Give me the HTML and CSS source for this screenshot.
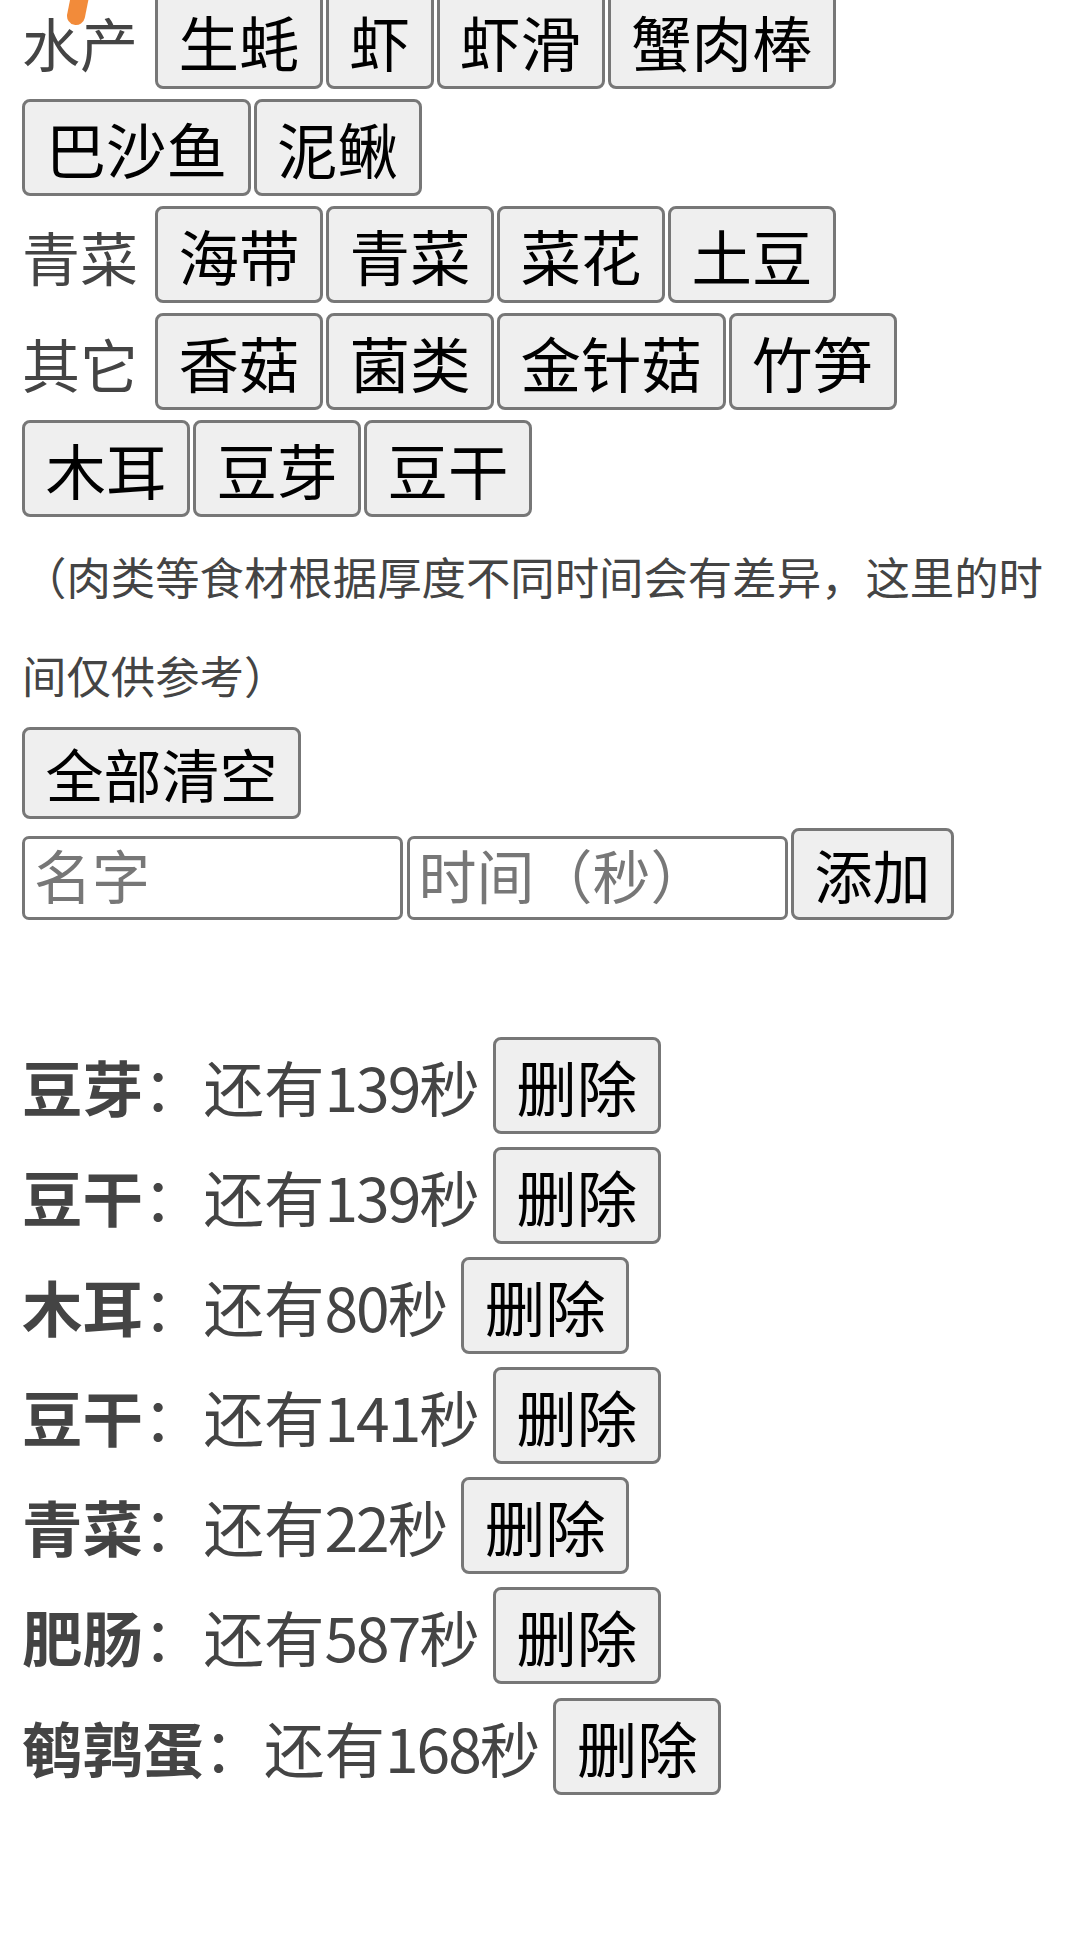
FILE: index.html
```html
<!DOCTYPE html>
<html lang="zh-CN">
<head>
<meta charset="utf-8">
<title>火锅计时器</title>
<link rel="stylesheet" href="styles.css">
</head>
<body>
<div class="page">
  <div class="cats">
    <div class="cat">
      <span class="cat-label">水产</span>
      <button class="btn">生蚝</button>
      <button class="btn">虾</button>
      <button class="btn">虾滑</button>
      <button class="btn">蟹肉棒</button>
      <button class="btn">巴沙鱼</button>
      <button class="btn">泥鳅</button>
    </div>
    <div class="cat">
      <span class="cat-label">青菜</span>
      <button class="btn">海带</button>
      <button class="btn">青菜</button>
      <button class="btn">菜花</button>
      <button class="btn">土豆</button>
    </div>
    <div class="cat">
      <span class="cat-label">其它</span>
      <button class="btn">香菇</button>
      <button class="btn">菌类</button>
      <button class="btn">金针菇</button>
      <button class="btn">竹笋</button>
      <button class="btn">木耳</button>
      <button class="btn">豆芽</button>
      <button class="btn">豆干</button>
    </div>
  </div>

  <p class="note">（肉类等食材根据厚度不同时间会有差异，这里的时间仅供参考）</p>

  <button class="btn btn-sm">全部清空</button>

  <div class="add-row">
    <input class="field" type="text" placeholder="名字">
    <input class="field" type="text" placeholder="时间（秒）">
    <button class="btn btn-sm">添加</button>
  </div>

  <ul class="timers">
    <li class="timer"><b class="timer-name">豆芽</b>：还有<span class="secs">139</span>秒<button class="btn timer-del">删除</button></li>
    <li class="timer"><b class="timer-name">豆干</b>：还有<span class="secs">139</span>秒<button class="btn timer-del">删除</button></li>
    <li class="timer"><b class="timer-name">木耳</b>：还有<span class="secs">80</span>秒<button class="btn timer-del">删除</button></li>
    <li class="timer"><b class="timer-name">豆干</b>：还有<span class="secs">141</span>秒<button class="btn timer-del">删除</button></li>
    <li class="timer"><b class="timer-name">青菜</b>：还有<span class="secs">22</span>秒<button class="btn timer-del">删除</button></li>
    <li class="timer"><b class="timer-name">肥肠</b>：还有<span class="secs">587</span>秒<button class="btn timer-del">删除</button></li>
    <li class="timer"><b class="timer-name">鹌鹑蛋</b>：还有<span class="secs">168</span>秒<button class="btn timer-del">删除</button></li>
  </ul>
</div>

<svg class="touch-dot" width="40" height="40" viewBox="0 0 40 40" aria-hidden="true">
  <line x1="22" y1="-24" x2="14" y2="16" stroke="#f28b3a" stroke-width="18" stroke-linecap="round"/>
</svg>
</body>
</html>
```

FILE: styles.css
```css
html, body {
  margin: 0;
  padding: 0;
  background: #ffffff;
}

body {
  font-family: "Noto Sans CJK SC", "Noto Sans", sans-serif;
  color: #444444;
  width: 1080px;
  overflow: hidden;
}

.page {
  margin-top: -8px;
  padding: 0 22px;
}

.cats {
  display: flex;
  flex-direction: column;
  gap: 10px;
}

.cat {
  display: flex;
  flex-wrap: wrap;
  align-items: baseline;
  gap: 10px 3px;
}

.cat-label {
  font-size: 58px;
  color: #444444;
  margin-right: 14px;
  width: 116px;
}

.btn {
  font-family: "Noto Sans CJK SC", "Noto Sans", sans-serif;
  font-size: 60.5px;
  line-height: 85px;
  padding: 3px 20.5px;
  border: 3px solid #777777;
  border-radius: 8px;
  background: #efefef;
  color: #000000;
  margin: 0;
  box-sizing: content-box;
}

.btn-sm {
  font-size: 58px;
  line-height: 80px;
}

.note {
  margin: 9px 0 3px;
  font-size: 44.4px;
  line-height: 99px;
  color: #444444;
}

.add-row {
  display: flex;
  align-items: flex-start;
  gap: 3.5px;
  margin-top: 9px;
}

.field {
  box-sizing: border-box;
  width: 381px;
  height: 84px;
  margin: 8px 0 0;
  padding: 0 9px 9px;
  line-height: 69px;
  border: 3px solid #777777;
  border-radius: 7px;
  background: #ffffff;
  font-family: "Noto Sans CJK SC", "Noto Sans", sans-serif;
  font-size: 58px;
  color: #000000;
}

.field::placeholder {
  color: #777777;
}

.timers {
  list-style: none;
  margin: 117px 0 0;
  padding: 0;
}

.timer {
  font-size: 60.5px;
  color: #444444;
  margin-bottom: 13.1px;
}

.timer-name {
  font-weight: 700;
}

.secs {
  letter-spacing: -2px;
}

.timer-del {
  margin-left: 13px;
}

.touch-dot {
  position: absolute;
  left: 62px;
  top: 0;
}
```
